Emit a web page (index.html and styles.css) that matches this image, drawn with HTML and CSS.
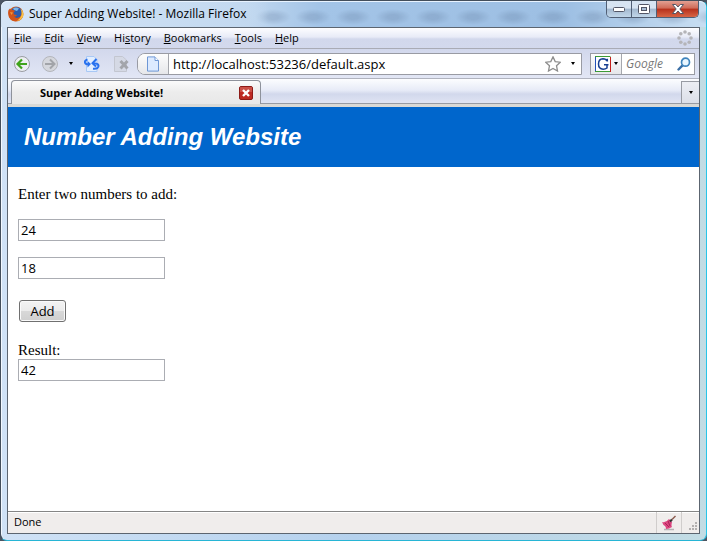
FILE: index.html
```html
<!DOCTYPE html>
<html lang="en">
<head>
  <meta charset="UTF-8">
  <meta name="viewport" content="width=device-width, initial-scale=1.0">
  <title>Super Adding Website!</title>
  <link rel="stylesheet" href="styles.css">
</head>
<body>
  <div class="window">
    <header class="titlebar">
      <svg class="logo" width="16" height="16" viewBox="0 0 16 16" aria-hidden="true">
        <circle cx="8" cy="8" r="7.5" fill="#d9601a"/>
        <circle cx="8.500" cy="6.500" r="5.500" fill="#2b5cae"/>
        <path d="M5 2.500Q8 .5 11 2.500L9 5 6 4z" fill="#7db6e8"/>
        <path d="M.5 4L2 2.500 3.500 4Q6 3.500 7 5L5.500 6.500 6 8.500l3 .5q-1 2-3 1.500 2 2.500 6 .5 2-2 1.500-5Q16 9 13 13q-5 4-10 1Q-1 10 .5 4z" fill="#d2541a"/>
        <path d="M12.500 2.500Q16.500 6 15 10.500 13 14.500 9 15q3.500-2.500 4.500-6 .5-3-1-6.500z" fill="#f7c445"/>
        <path d="M2 6l3 .5L3.500 9z" fill="#f4963a"/>
      </svg>
      <span class="window-title">Super Adding Website! - Mozilla Firefox</span>
      <div class="window-buttons">
        <button class="win-btn" aria-label="Minimize">
          <svg width="13" height="6" viewBox="0 0 13 6"><rect x=".5" y="1.5" width="11" height="4" rx="1" fill="#fff" stroke="#535666"/></svg>
        </button>
        <button class="win-btn" aria-label="Maximize">
          <svg width="12" height="10" viewBox="0 0 12 10"><rect x=".5" y=".5" width="11" height="9" rx="1" fill="#fff" stroke="#535666"/><rect x="3.500" y="3.500" width="5" height="3" fill="#a9bdd3" stroke="#535666"/></svg>
        </button>
        <button class="win-btn win-close" aria-label="Close">
          <svg width="12" height="10" viewBox="0 0 12 10"><path d="M.5.5h3.300L6 3 8.200.5h3.300L7.800 5l3.700 4.500H8.200L6 7 3.800 9.500H.5L4.200 5z" fill="#fff" stroke="#535666"/></svg>
        </button>
      </div>
    </header>

    <div class="client">
      <nav class="menubar">
        <a href="#"><u>F</u>ile</a>
        <a href="#"><u>E</u>dit</a>
        <a href="#"><u>V</u>iew</a>
        <a href="#">Hi<u>s</u>tory</a>
        <a href="#"><u>B</u>ookmarks</a>
        <a href="#"><u>T</u>ools</a>
        <a href="#"><u>H</u>elp</a>
        <svg class="throbber" width="16" height="16" viewBox="0 0 16 16" fill="#b4b4b8" aria-hidden="true">
          <circle cx="8" cy="2" r="1.800"/><circle cx="12.200" cy="3.800" r="1.800"/><circle cx="14" cy="8" r="1.800"/><circle cx="12.200" cy="12.200" r="1.800"/><circle cx="8" cy="14" r="1.800"/><circle cx="3.800" cy="12.200" r="1.800"/><circle cx="2" cy="8" r="1.800"/><circle cx="3.800" cy="3.800" r="1.800"/>
        </svg>
      </nav>

      <div class="toolbar">
        <button class="tool" aria-label="Back">
          <svg width="16" height="16" viewBox="0 0 16 16"><circle cx="8" cy="8" r="7.500" fill="#eceef2" stroke="#9a9ca2"/><path d="M13 8H4M8 3.500L3.500 8 8 12.500" fill="none" stroke="#3fa31b" stroke-width="2.200"/></svg>
        </button>
        <button class="tool tool-forward" aria-label="Forward">
          <svg width="16" height="16" viewBox="0 0 16 16"><circle cx="8" cy="8" r="7.500" fill="#d5d7dd" stroke="#b3b5bb"/><path d="M3 8h9M8 3.500L12.500 8 8 12.500" fill="none" stroke="#a2a4a9" stroke-width="2"/></svg>
        </button>
        <button class="tool tool-history" aria-label="Recent pages"><span class="caret"></span></button>
        <button class="tool" aria-label="Reload">
          <svg width="16" height="16" viewBox="0 0 16 16"><path d="M2.500.5H10l3 3v12H2.500z" fill="#e2eeff" stroke="#a8c8f5"/><path d="M3.500 3.500Q-.5 5 1.500 7.500 2.500 8.500 4 8" fill="none" stroke="#2871ee" stroke-width="2"/><path d="M3.500 5v6.500L7 8z" fill="#2871ee"/><path d="M9 12.800q6 .5 5.500-3.300-.5-2.500-5-2" fill="none" stroke="#2871ee" stroke-width="2"/><path d="M12.500 3L8.500 7.300l3.500 3.200" fill="none" stroke="#2871ee" stroke-width="2"/></svg>
        </button>
        <button class="tool tool-stop" aria-label="Stop">
          <svg width="16" height="16" viewBox="0 0 16 16"><path d="M.5.500H8.500L12.500 4v11.500H.5z" fill="#d5d9e5" stroke="#c3c6d0"/><path d="M6.500 5l7 7.500M13.500 5l-7 7.500" stroke="#a3a5ab" stroke-width="3"/></svg>
        </button>
        <div class="urlbar">
          <div class="site-icon">
            <svg width="14" height="16" viewBox="0 0 14 16"><path d="M1.500.9H9L12.500 4.500v10.600h-11z" fill="#dceaff" stroke="#6e97d5"/><path d="M9 1v3.500h3.500" fill="#fff" stroke="#6e97d5"/></svg>
          </div>
          <input class="url" type="text" value="http://localhost:53236/default.aspx" aria-label="Address">
          <button class="star" aria-label="Bookmark this page">
            <svg width="16" height="16" viewBox="0 0 16 16"><path d="M8 .9l2.200 4.700 5.100.6-3.800 3.500 1 5.300L8 12.500 3.500 15l1-5.300L.7 6.200l5.100-.6z" fill="#fff" stroke="#8d8d8d" stroke-width="1.300"/></svg>
          </button>
          <button class="drop" aria-label="Show history"><span class="caret"></span></button>
        </div>
        <div class="searchbar">
          <button class="engine" aria-label="Choose search engine">
            <svg width="16" height="16" viewBox="0 0 16 16"><rect width="16" height="16" fill="#fff"/><path d="M.5 0v16" stroke="#2553b8"/><path d="M0 .5h15.500M0 15.500h16" stroke="#3d9b35"/><path d="M15.500 1v15" stroke="#c3201b"/><path d="M12.300 5.500V2.800M12 5Q11 2.800 8 2.800 3.500 3 3.500 8t4.700 5.200q2.300 0 3.800-1.200V9M9 8.800h4.500" fill="none" stroke="#173f91" stroke-width="1.500"/></svg>
            <span class="caret"></span>
          </button>
          <input class="search" type="text" placeholder="Google" aria-label="Search">
          <button class="go" aria-label="Search">
            <svg width="14" height="14" viewBox="0 0 14 14"><path d="M5.300 8.700L1.500 12.500" stroke="#3a6ea5" stroke-width="2.400" stroke-linecap="round"/><circle cx="8.500" cy="5.200" r="4" fill="#e9f6ff" stroke="#3f84bd" stroke-width="1.700"/></svg>
          </button>
        </div>
      </div>

      <div class="tabstrip">
        <div class="tab">
          <span>Super Adding Website!</span>
          <button class="tab-close" aria-label="Close tab">
            <svg width="14" height="14" viewBox="0 0 14 14"><rect x=".5" y=".5" width="13" height="13" rx="1.500" fill="#bd2a22" stroke="#8d1b17"/><path d="M1 1h12v5H1z" fill="#d4695f" opacity=".6"/><path d="M4 4l6 6M10 4l-6 6" stroke="#fff" stroke-width="2.400"/></svg>
          </button>
        </div>
        <button class="tab-list" aria-label="List all tabs"><span class="caret"></span></button>
      </div>

      <main class="page">
        <h1 class="banner">Number Adding Website</h1>
        <form class="adder">
          <p>Enter two numbers to add:</p>
          <input class="number" type="text" value="24" aria-label="First number">
          <input class="number" type="text" value="18" aria-label="Second number">
          <button class="add" type="button">Add</button>
          <div class="result">
            <label for="result">Result:</label>
            <input class="number" id="result" type="text" value="42">
          </div>
        </form>
      </main>

      <footer class="statusbar">
        <span class="status-text">Done</span>
        <span class="status-icon">
          <svg width="16" height="16" viewBox="0 0 16 16" aria-hidden="true"><path d="M3 14.500h10" stroke="#b5b2b5" stroke-width="1.500"/><path d="M1 7q4 1 7-3l3 3q-1 4 0 5-3 2-6 2 0-2-1-3Q2 10 1 7z" fill="#dc4680"/><path d="M4 8l4 4M7 6l2 5" stroke="#a92458"/><path d="M9 6.500L11 4.500" stroke="#333" stroke-width="2.200"/><path d="M11 4.500L14.500 1" stroke="#8b5a4e" stroke-width="1.500"/></svg>
        </span>
        <svg class="grip" width="10" height="10" viewBox="0 0 10 10" fill="#b3b0b0" aria-hidden="true"><path d="M7 0h2v2H7zM4 3h2v2H4zM7 3h2v2H7zM1 6h2v2H1zM4 6h2v2H4zM7 6h2v2H7z"/></svg>
      </footer>
    </div>
  </div>
</body>
</html>
```
FILE: styles.css
```css
* {
  box-sizing: border-box;
}

body {
  margin: 0;
  background: #4b5563;
  color: #000;
  font: 12px/16px "Open Sans", "Noto Sans", sans-serif;
}

button, input {
  margin: 0;
  padding: 0;
  border: 0;
  background: none;
  color: inherit;
  font: inherit;
}

input {
  min-width: 0;
}

button {
  display: flex;
  align-items: center;
  justify-content: center;
}

svg {
  display: block;
  flex: none;
}

.caret {
  border: 2px solid transparent;
  border-top: 3px solid #000;
  border-bottom: 0;
}

/* window frame */
.window {
  display: flex;
  flex-direction: column;
  min-height: 100vh;
  padding: 0 6px 6px;
  border: 1px solid #434e5b;
  border-right-color: #27c5e8;
  border-bottom-color: #27b5d5;
  border-radius: 7px;
  background: linear-gradient(90deg, #d0e2f6, #b5d1ed 50%, #c2dce4);
  box-shadow: inset 1px 1px #f2f8ff;
}

/* glass title bar, with the window behind showing through on the right */
.titlebar {
  display: flex;
  align-items: center;
  gap: 5px;
  height: 26px;
  margin: 0 -6px;
  padding: 0 7px;
  border-radius: 6px 6px 0 0;
  background:
    linear-gradient(90deg, #d5e5f6, #c3d9f0 34%, transparent 38%),
    radial-gradient(ellipse 18px 8px at 20px 16px, rgba(90, 115, 150, 0.25) 30%, transparent) 12px 0 / 40px 26px repeat-x,
    linear-gradient(90deg, #c3d9f0 34%, #a3c4e7 45%, #9dbfe3 80%, #c8def2);
  box-shadow: inset 0 1px #e8f3ff;
}

.window-title {
  flex: 1;
}

.window-buttons {
  display: flex;
  align-self: flex-start;
  overflow: hidden;
  height: 17px;
  border: 1px solid #515f75;
  border-top: 0;
  border-radius: 0 0 5px 5px;
}

.win-btn {
  width: 25px;
  border-right: 1px solid #515f75;
  background: linear-gradient(#d7e4f2 45%, #a3b8cf 50%, #c1d6e9);
}

.win-close {
  width: 41px;
  border-right: 0;
  background: linear-gradient(#e2a093, #cf6a57 45%, #b6301c 50%, #d86545);
}

.client {
  display: flex;
  flex: 1;
  flex-direction: column;
  border: 1px solid #5c6570;
  background: #fff;
}

/* browser toolbars */
.menubar {
  display: flex;
  align-items: center;
  gap: 13px;
  height: 21px;
  padding: 0 6px;
  border-bottom: 1px solid #a9abb5;
  background: linear-gradient(#fdfdff, #e8ebf7 45%, #d2d8ec 55%, #d3d9ed);
  font-size: 11px;
}

.menubar a {
  color: inherit;
  text-decoration: none;
}

.throbber {
  margin-left: auto;
}

.toolbar {
  display: flex;
  align-items: center;
  height: 29px;
  padding: 0 4px 0 6px;
  background: linear-gradient(#d2d8ec, #e2e6f5);
}

.tool-forward {
  margin-left: 12px;
}

.tool-history {
  width: 26px;
}

.tool-stop {
  margin: 0 7px 0 14px;
}

.urlbar,
.searchbar {
  display: flex;
  height: 22px;
  border: 1px solid #999ba3;
  background: #fff;
}

.urlbar {
  flex: 1;
  border-radius: 8px 0 0 8px;
}

.site-icon {
  display: flex;
  align-items: center;
  justify-content: center;
  width: 31px;
  border-right: 1px solid #a5a7ad;
  border-radius: 7px 0 0 7px;
  background: linear-gradient(#fdfdfd, #e6e7ea);
}

.url {
  flex: 1;
  padding-left: 4px;
  font-size: 13px;
}

.drop {
  width: 16px;
  margin-left: 4px;
}

.searchbar {
  width: 105px;
  margin-left: 8px;
}

.engine {
  gap: 3px;
  width: 31px;
  border-right: 1px solid #a5a7ad;
  background: linear-gradient(#fdfdfd, #e6e7ea);
}

.search {
  flex: 1;
  padding-left: 4px;
}

.search::placeholder {
  color: #777;
  font-style: italic;
  opacity: 1;
}

.go {
  width: 20px;
}

/* tabs */
.tabstrip {
  display: flex;
  align-items: flex-end;
  justify-content: space-between;
  height: 29px;
  padding-left: 3px;
  border-top: 1px solid #b0b3be;
  border-bottom: 3px solid #d9d9d6;
  background: linear-gradient(#fcfdff, #e7ebf7 45%, #d2d8ec 60%, #e0e5f4);
  box-shadow: inset 0 -1px #969aa3;
}

.tab {
  display: flex;
  align-items: center;
  justify-content: space-between;
  width: 250px;
  height: 24px;
  padding: 0 7px 0 28px;
  border: 1px solid #8e929b;
  border-bottom: 0;
  border-radius: 4px 4px 0 0;
  background: linear-gradient(#fbfbfb, #ececec 50%, #e8e8e8);
  font-size: 11px;
  font-weight: bold;
}

.tab-list {
  width: 18px;
  height: 23px;
  border: 1px solid #989ba3;
  border-right: 0;
  background: linear-gradient(#eceef4, #dcdfe8);
}

/* web page */
.page {
  flex: 1;
  background: #fff;
  font: 15px/17px "Liberation Serif", serif;
}

.banner {
  margin: 0;
  padding: 16px;
  background: #0066cc;
  color: #fff;
  font: italic bold 24px/28px "Liberation Sans", sans-serif;
}

.adder {
  display: flex;
  flex-direction: column;
  align-items: flex-start;
  gap: 16px;
  padding: 19px 10px;
}

.adder p {
  margin: 0;
}

.number {
  width: 147px;
  height: 22px;
  padding: 0 2px;
  border: 1px solid #abadb3;
  background: #fff;
  font: 13px/16px "Open Sans", "Noto Sans", sans-serif;
}

.add {
  width: 47px;
  height: 22px;
  margin: 5px 1px 4px;
  border: 1px solid #707070;
  border-radius: 3px;
  background: linear-gradient(#f3f3f3, #ebebeb 48%, #d8d8d8 52%, #cfcfcf);
  box-shadow: inset 0 0 0 1px #fafafa;
  font: 13px/16px "Open Sans", "Noto Sans", sans-serif;
}

.result {
  display: flex;
  flex-direction: column;
}

/* status bar */
.statusbar {
  display: flex;
  height: 22px;
  border-top: 1px solid #858585;
  background: #f0edec;
  box-shadow: inset 0 1px #fff;
  font-size: 11px;
  line-height: 20px;
}

.status-text {
  flex: 1;
  padding-left: 6px;
}

.status-icon {
  display: flex;
  align-items: center;
  justify-content: center;
  width: 26px;
  border: 1px solid #d0cdcc;
  border-width: 0 1px;
}

.grip {
  align-self: flex-end;
  margin: 0 1px 1px 6px;
}
```
